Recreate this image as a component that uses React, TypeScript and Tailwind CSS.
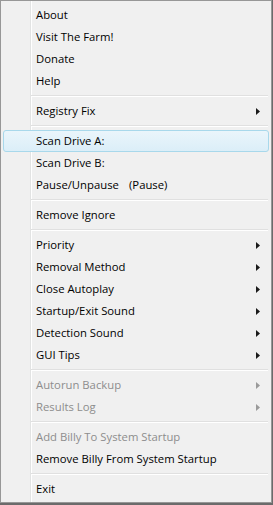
type Item =
  | { sep: true }
  | { sep?: false; label: string; extra?: string; sub?: boolean; disabled?: boolean; hot?: boolean };

const items: Item[] = [
  { label: "About" },
  { label: "Visit The Farm!" },
  { label: "Donate" },
  { label: "Help" },
  { sep: true },
  { label: "Registry Fix", sub: true },
  { sep: true },
  { label: "Scan Drive A:", hot: true },
  { label: "Scan Drive B:" },
  { label: "Pause/Unpause", extra: "(Pause)" },
  { sep: true },
  { label: "Remove Ignore" },
  { sep: true },
  { label: "Priority", sub: true },
  { label: "Removal Method", sub: true },
  { label: "Close Autoplay", sub: true },
  { label: "Startup/Exit Sound", sub: true },
  { label: "Detection Sound", sub: true },
  { label: "GUI Tips", sub: true },
  { sep: true },
  { label: "Autorun Backup", sub: true, disabled: true },
  { label: "Results Log", sub: true, disabled: true },
  { sep: true },
  { label: "Add Billy To System Startup", disabled: true },
  { label: "Remove Billy From System Startup" },
  { sep: true },
  { label: "Exit" },
];

function Arrow({ disabled }: { disabled?: boolean }) {
  return (
    <svg width="4" height="7" viewBox="0 0 4 7" className="absolute left-[255px] top-[8px]">
      <path d="M0 0 L4 3.5 L0 7 Z" fill={disabled ? "#9a9a9a" : "#1a1a1a"} />
    </svg>
  );
}

export default function App() {
  return (
    <div className="w-[273px] h-[505px] bg-[#6b6b6b] overflow-hidden">
      <div
        className="relative w-[272px] h-[503px] bg-[#f0f0f0] border border-[#979797] pt-[3px] text-[11.3px] leading-none"
        style={{ fontFamily: '"Open Sans", "Noto Sans", sans-serif' }}
      >
        {/* gutter line */}
        <div className="absolute left-[29px] top-0 bottom-0 w-[2px] flex">
          <div className="w-px bg-[#e2e3e3]" />
          <div className="w-px bg-white" />
        </div>

        {items.map((it, i) =>
          it.sep ? (
            <div key={i} className="relative h-[8px] ml-[30px] mr-[3px] flex flex-col justify-center">
              <div className="h-px bg-[#e0e0e0]" />
              <div className="h-px bg-white" />
            </div>
          ) : (
            <div key={i} className="relative h-[22px]">
              {it.hot && (
                <div className="absolute left-[2px] right-[2px] top-0 bottom-0 rounded-[3px] border border-[#a8d8eb] bg-gradient-to-b from-[#eaf5fb] to-[#dbeef8]" />
              )}
              <div
                className={`relative flex items-center h-full pl-[35px] ${
                  it.disabled ? "text-[#8d8d8d]" : "text-black"
                }`}
              >
                <span className={it.extra ? "w-[93px] shrink-0" : ""}>{it.label}</span>
                {it.extra && <span>{it.extra}</span>}
              </div>
              {it.sub && <Arrow disabled={it.disabled} />}
            </div>
          )
        )}
      </div>
    </div>
  );
}
